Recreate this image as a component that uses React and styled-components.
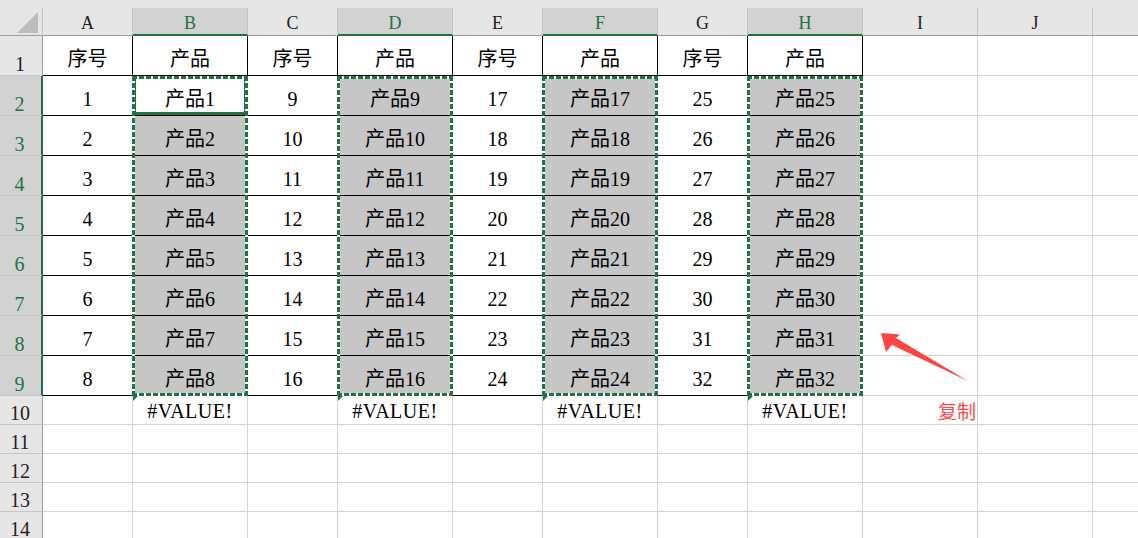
import { Fragment } from "react";
import styled, { createGlobalStyle, css } from "styled-components";

const GREEN = "#217346";
const SERIF = `"Liberation Serif", "Noto Sans CJK SC", serif`;

const GlobalStyle = createGlobalStyle`
  *, *::before, *::after { box-sizing: border-box; }
  body { margin: 0; background: #fff; overflow: hidden; }
`;

const COLUMNS = [
  { letter: "A", width: 90 },
  { letter: "B", width: 115, sel: true },
  { letter: "C", width: 90 },
  { letter: "D", width: 115, sel: true },
  { letter: "E", width: 90 },
  { letter: "F", width: 115, sel: true },
  { letter: "G", width: 90 },
  { letter: "H", width: 115, sel: true },
  { letter: "I", width: 115 },
  { letter: "J", width: 115 },
  { letter: "", width: 115 },
];

const ROW_HEIGHTS = [40, 40, 40, 40, 40, 40, 40, 40, 40, 29, 29, 29, 29, 29];

const Sheet = styled.div`
  display: grid;
  grid-template-columns: 43px ${COLUMNS.map((c) => c.width + "px").join(" ")};
  grid-template-rows: 36px ${ROW_HEIGHTS.map((h) => h + "px").join(" ")};
  width: 1138px;
  height: 538px;
  overflow: hidden;
  background: #e6e6e6;
  font-family: ${SERIF};
`;

const Corner = styled.div`
  grid-row: 1;
  grid-column: 1;
  margin-top: 8px;
  border-right: 1px solid #c3c3c3;
  border-bottom: 1px solid #9e9e9e;
  display: flex;
  align-items: flex-end;
  justify-content: flex-end;
  padding: 0 4px 2px 0;
`;

const ColHead = styled.div`
  grid-row: 1;
  grid-column: ${(p) => p.$c};
  margin-top: 8px;
  display: flex;
  align-items: center;
  justify-content: center;
  padding-top: 4px;
  font-size: 18px;
  background: ${(p) => (p.$sel ? "#d2d2d2" : "#e6e6e6")};
  color: ${(p) => (p.$sel ? GREEN : "#222")};
  border-right: 1px solid #c3c3c3;
  border-bottom: ${(p) => (p.$sel ? `2px solid ${GREEN}` : "1px solid #9e9e9e")};
`;

const RowHead = styled.div`
  grid-row: ${(p) => p.$r};
  grid-column: 1;
  display: flex;
  align-items: flex-end;
  justify-content: center;
  padding-right: 2px;
  line-height: 22px;
  font-size: 20px;
  background: ${(p) => (p.$sel ? "#d2d2d2" : "#e6e6e6")};
  color: ${(p) => (p.$sel ? GREEN : "#222")};
  border-bottom: 1px solid #c6c6c6;
  border-right: ${(p) => (p.$sel ? `2px solid ${GREEN}` : "1px solid #9e9e9e")};
`;

const Cell = styled.div`
  grid-row: ${(p) => p.$r};
  grid-column: ${(p) => p.$c};
  position: relative;
  display: flex;
  align-items: center;
  justify-content: ${(p) => (p.$right ? "flex-end" : "center")};
  padding: ${(p) => (p.$tall ? "6px 0 0" : "1px 0 0")};
  font-size: 20px;
  line-height: 22px;
  color: #000;
  white-space: nowrap;
  background: ${(p) => (p.$fill ? "#c6c6c6" : "#fff")};
  border-right: 1px solid ${(p) => (p.$table ? "#000" : "#d4d4d4")};
  border-bottom: 1px solid ${(p) => (p.$table ? "#000" : "#d4d4d4")};
  ${(p) =>
    p.$active &&
    css`
      box-shadow: inset 0 0 0 3px ${GREEN};
    `}
  ${(p) =>
    p.$flag &&
    css`
      letter-spacing: 0.5px;
      &::before {
        content: "";
        position: absolute;
        left: 0;
        top: 0;
        border-style: solid;
        border-width: 5px 5px 0 0;
        border-color: ${GREEN} transparent transparent transparent;
      }
    `}
`;

const Note = styled.span`
  font-family: "Noto Sans CJK SC", "Liberation Sans", sans-serif;
  font-size: 19px;
  color: #ff4848;
  padding-right: 1px;
`;

const dashH = `repeating-linear-gradient(90deg, ${GREEN} 0 5px, #fff 5px 7px)`;
const dashV = `repeating-linear-gradient(180deg, ${GREEN} 0 5px, #fff 5px 7px)`;

const Marquee = styled.div`
  grid-row: 3 / 11;
  grid-column: ${(p) => p.$c};
  position: relative;
  z-index: 1;
  pointer-events: none;
  margin: 0 0 0 -1px;
  background:
    ${dashH} left top / 100% 3px no-repeat,
    ${dashH} left bottom / 100% 3px no-repeat,
    ${dashV} left top / 3px 100% no-repeat,
    ${dashV} right top / 3px 100% no-repeat;
`;

const Callout = styled.svg`
  grid-row: 9 / 11;
  grid-column: 10;
  position: relative;
  z-index: 1;
  width: 115px;
  height: 80px;
  overflow: visible;
`;

function cellContent(row, ci) {
  const product = ci % 2 === 1;
  if (row === 1) return product ? "产品" : "序号";
  if (row <= 9) {
    const n = Math.floor(ci / 2) * 8 + row - 1;
    return product ? `产品${n}` : n;
  }
  return null;
}

function App() {
  const rows = ROW_HEIGHTS.map((h, i) => i + 1);
  return (
    <>
      <GlobalStyle />
      <Sheet>
        <Corner>
          <svg width="21" height="21" viewBox="0 0 21 21">
            <polygon points="0,21 21,0 21,21" fill="#bcbcbc" />
          </svg>
        </Corner>
        {COLUMNS.map((c, ci) => (
          <ColHead key={ci} $c={ci + 2} $sel={c.sel}>
            {c.letter}
          </ColHead>
        ))}
        {rows.map((row) => (
          <Fragment key={row}>
            <RowHead $r={row + 1} $sel={row >= 2 && row <= 9}>
              {row}
            </RowHead>
            {COLUMNS.map((c, ci) => {
              const inTable = ci < 8 && row <= 9;
              const selCol = ci < 8 && ci % 2 === 1;
              const active = ci === 1 && row === 2;
              let content = inTable ? cellContent(row, ci) : null;
              if (row === 10 && selCol) content = "#VALUE!";
              if (row === 10 && ci === 8) content = <Note>复制</Note>;
              return (
                <Cell
                  key={ci}
                  $r={row + 1}
                  $c={ci + 2}
                  $table={inTable}
                  $tall={row <= 9}
                  $fill={selCol && row >= 2 && row <= 9 && !active}
                  $active={active}
                  $flag={row === 10 && selCol}
                  $right={row === 10 && ci === 8}
                >
                  {content}
                </Cell>
              );
            })}
          </Fragment>
        ))}
        {[3, 5, 7, 9].map((c) => (
          <Marquee key={c} $c={c} />
        ))}
        <Callout viewBox="0 0 115 80">
          <polygon
            points="18,17 37,18.5 33,22 105,65 29,29 23,36"
            fill="#ff4444"
          />
        </Callout>
      </Sheet>
    </>
  );
}

export default App;
